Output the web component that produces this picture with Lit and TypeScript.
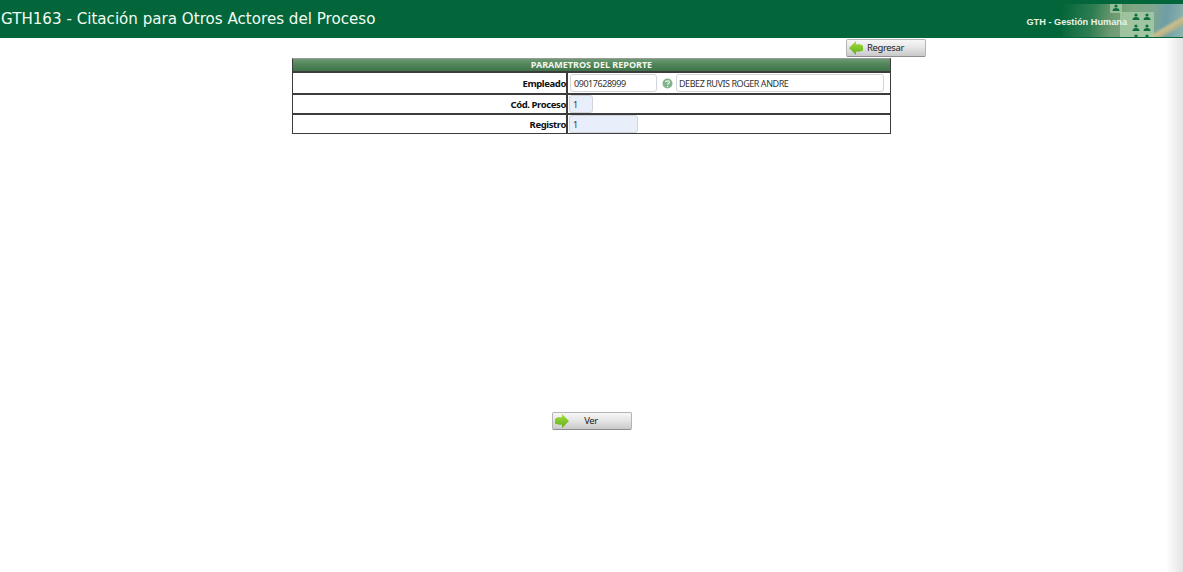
import { css, html, LitElement, svg } from "lit";
import { customElement } from "lit/decorators.js";

const ARROW_LEFT = "M0 7 L7 0 L7 3.5 C10 3 13 3.5 14 5 L14 9.5 C12 10.5 10 11 7 10.5 L7 14 Z";
const ARROW_RIGHT = "M14 7 L7 0 L7 3.5 C4 3 1 3.5 0 5 L0 9.5 C2 10.5 4 11 7 10.5 L7 14 Z";

// little people pattern in the header corner, centre of each figure
const PEOPLE = [
	[1116, 8], [1136, 17], [1147, 17], [1136, 28], [1147, 28], [1136, 38], [1147, 38],
];

@customElement("app-root")
export class AppRoot extends LitElement {
	static override styles = css`
		:host {
			display: block;
			position: relative;
			height: 572px;
			overflow: hidden;
			background: #fff;
			font-family: "Noto Sans", "Open Sans", sans-serif;
			color: #111;
		}

		.header {
			position: relative;
			display: flex;
			align-items: center;
			justify-content: space-between;
			height: 38px;
			background: #03663a;
			color: #f2fbf2;
			overflow: hidden;
		}

		.title {
			padding-left: 1px;
			padding-bottom: 1px;
			font-family: "DejaVu Sans", sans-serif;
			font-size: 15.12px;
			white-space: nowrap;
		}

		.art {
			position: absolute;
			top: 4px;
			right: 0;
			width: 120px;
			height: 33px;
			background:
				linear-gradient(150deg, transparent 78%, #c9bd8d 82%, #b7b48a 86%, transparent 90%),
				linear-gradient(100deg, #03663a 0%, #2f7d52 25%, #6f9a72 42%, #7fa582 55%, #7fa68f 72%, #6f9ea6 84%, #8fb4ad 100%);
		}

		.pattern {
			position: absolute;
			top: 0;
			left: 1063px;
			pointer-events: none;
		}

		.module {
			position: relative;
			padding-right: 56px;
			padding-top: 6px;
			font-family: "Liberation Sans", sans-serif;
			font-size: 9.2px;
			font-weight: 700;
			color: #e8f3e8;
			white-space: nowrap;
		}

		.actions {
			display: flex;
			justify-content: flex-end;
			box-sizing: border-box;
			height: 20px;
			padding: 1px 257px 0 0;
		}

		.btn {
			display: flex;
			align-items: center;
			box-sizing: border-box;
			width: 80px;
			height: 18px;
			padding: 0;
			border: 1px solid #b4b4b4;
			border-bottom-color: #8d8d8d;
			border-radius: 2px;
			background: linear-gradient(#f7f7f7 0%, #e6e6e6 45%, #c9c9c9 100%);
			font-family: inherit;
			font-size: 9.5px;
			letter-spacing: -0.35px;
			color: #222;
		}

		.btn svg {
			margin-left: 2px;
			flex: none;
		}

		.btn .label {
			flex: 1;
			padding-right: 17px;
			text-align: center;
			line-height: 1;
		}

		.table {
			box-sizing: border-box;
			width: 599px;
			margin-left: 292px;
			border: 1px solid #3c3c3c;
			border-top-color: #9a9a9a;
		}

		.caption {
			height: 12px;
			line-height: 12px;
			background: linear-gradient(#6c9a72 0%, #4f8257 50%, #3f7349 100%);
			color: #f1f6ec;
			font-size: 9px;
			font-weight: 700;
			text-align: center;
		}

		.row {
			display: grid;
			grid-template-columns: 275px 1fr;
			height: 18px;
			border-top: 2px solid #3c3c3c;
		}

		.row.first {
			height: 20px;
		}

		.label-cell {
			display: flex;
			align-items: center;
			justify-content: flex-end;
			border-right: 2px solid #3c3c3c;
			font-size: 9.5px;
			font-weight: 700;
			letter-spacing: -0.4px;
			color: #111;
			white-space: nowrap;
		}

		.value-cell {
			display: flex;
			align-items: center;
			padding-left: 1px;
		}

		.field {
			box-sizing: border-box;
			display: flex;
			align-items: center;
			height: 18px;
			padding-left: 3px;
			border: 1px solid #d2d5dc;
			border-radius: 3px;
			background: #fff;
			font-size: 9px;
			letter-spacing: -0.45px;
			color: #333;
			white-space: nowrap;
		}

		.field.code {
			width: 87px;
			margin-left: 1px;
		}

		.field.name {
			width: 208px;
			padding-left: 2px;
		}

		.field.tint {
			background: #e8effb;
		}

		.field.small {
			width: 24px;
		}

		.field.mid {
			width: 69px;
		}

		.help {
			margin: 0 3px 0 5px;
			flex: none;
		}

		.footer {
			display: flex;
			justify-content: center;
			padding-top: 278px;
		}

		.edge {
			position: absolute;
			top: 38px;
			right: 0;
			bottom: 0;
			width: 17px;
			background: linear-gradient(90deg, rgba(232, 232, 232, 0) 0%, #e4e4e4 100%);
			pointer-events: none;
		}
	`;

	private arrow(d: string) {
		return html`<svg width="14" height="14" viewBox="0 0 14 14" aria-hidden="true">
			<defs>
				<linearGradient id="g" x1="0" y1="0" x2="0" y2="1">
					<stop offset="0" stop-color="#a6dc3c" />
					<stop offset="1" stop-color="#5fb01e" />
				</linearGradient>
			</defs>
			<path d=${d} fill="url(#g)" />
		</svg>`;
	}

	private person(x: number, y: number) {
		return svg`<circle cx=${x} cy=${y - 2} r="1.6" fill="#0d6f42" />
			<path d="M${x - 3.5} ${y + 3} q0 -3 3.5 -3 q3.5 0 3.5 3 z" fill="#0d6f42" />`;
	}

	override render() {
		return html`
			<div class="header">
				<div class="art"></div>
				<div class="title">GTH163 - Citación para Otros Actores del Proceso</div>
				<svg class="pattern" width="120" height="37" viewBox="1063 0 120 37" aria-hidden="true">
					<rect x="1110" y="4" width="12" height="9" fill="#a9cfa8" opacity="0.7" />
					<rect x="1120" y="12" width="34" height="25" fill="#a9cfa8" opacity="0.75" />
					${PEOPLE.map(([x, y]) => this.person(x, y))}
				</svg>
				<div class="module">GTH - Gestión Humana</div>
			</div>

			<div class="actions">
				<button class="btn">
					${this.arrow(ARROW_LEFT)}
					<span class="label">Regresar</span>
				</button>
			</div>

			<div class="table">
				<div class="caption">PARAMETROS DEL REPORTE</div>
				<div class="row first">
					<div class="label-cell">Empleado</div>
					<div class="value-cell">
						<div class="field code">09017628999</div>
						<svg class="help" width="11" height="11" viewBox="0 0 11 11" aria-hidden="true">
							<circle cx="5.5" cy="5.5" r="5" fill="#7fb58a" />
							<path d="M3.6 4.2 C3.8 2.4 7.4 2.4 7.4 4.2 C7.4 5.4 5.5 5.4 5.5 6.8 M5.5 8 V9" fill="none" stroke="#f2f8f0" stroke-width="1.2" />
						</svg>
						<div class="field name">DEBEZ RUVIS ROGER ANDRE</div>
					</div>
				</div>
				<div class="row">
					<div class="label-cell">Cód. Proceso</div>
					<div class="value-cell"><div class="field tint small">1</div></div>
				</div>
				<div class="row">
					<div class="label-cell">Registro</div>
					<div class="value-cell"><div class="field tint mid">1</div></div>
				</div>
			</div>

			<div class="footer">
				<button class="btn">
					${this.arrow(ARROW_RIGHT)}
					<span class="label">Ver</span>
				</button>
			</div>

			<div class="edge"></div>
		`;
	}
}

declare global {
	interface HTMLElementTagNameMap {
		"app-root": AppRoot;
	}
}
